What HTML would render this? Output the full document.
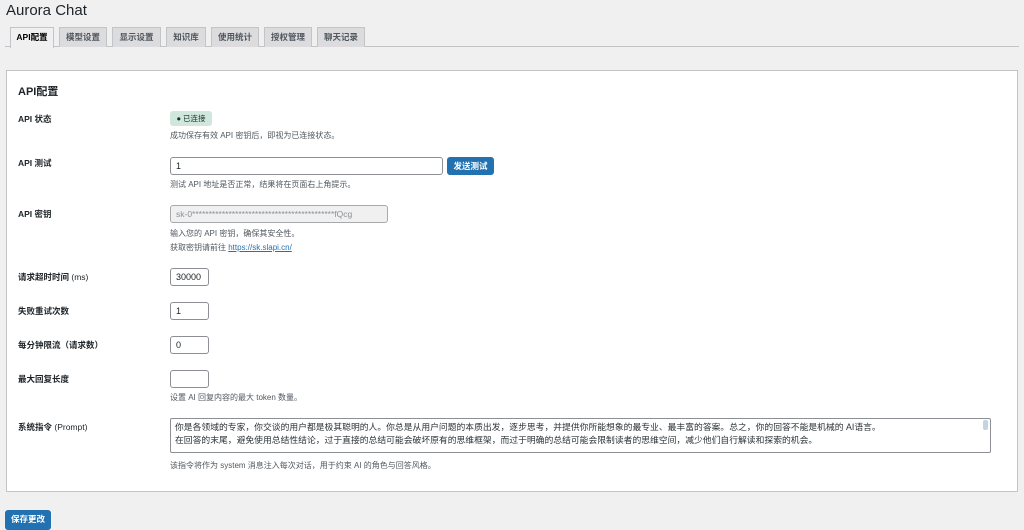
<!DOCTYPE html>
<html><head><meta charset="utf-8"><style>
*{box-sizing:border-box;margin:0;padding:0}
body{width:1024px;height:524px;overflow:hidden;background:#f0f0f1;font-family:"Liberation Sans","Noto Sans CJK SC",sans-serif;color:#1d2327;position:relative}
.a{position:absolute;white-space:nowrap}
.title{left:6px;top:2px;font-size:15px;color:#1d2327}
.tab{position:absolute;top:27px;height:20px;border:1px solid #c3c4c7;border-bottom:none;background:#dcdcde;font-size:8.5px;font-weight:bold;color:#50575e;text-align:center;line-height:19px}
.tab.on{background:#f0f0f1;color:#000;height:21px}
.line{left:5px;right:5px;top:46px;height:1px;background:#c3c4c7}
.panel{left:6px;top:70px;width:1012px;height:422px;background:#fff;border:1px solid #c3c4c7}
.lab{left:18px;font-size:8.5px;font-weight:bold}
.lab span{font-weight:normal}
.desc{left:170px;font-size:8px;color:#50575e}
.inp{position:absolute;border:1px solid #8c8f94;border-radius:3px;background:#fff;font-size:9px;padding-left:5px;line-height:16px}
.btn{position:absolute;background:#2271b1;color:#fff;border-radius:3px;font-size:8.5px;font-weight:bold;text-align:center}
</style></head><body>
<div class="a title">Aurora Chat</div>
<div class="a line"></div>
<div class="tab on" style="left:10px;width:44px">API配置</div>
<div class="tab" style="left:59px;width:48px">模型设置</div>
<div class="tab" style="left:112px;width:49px">显示设置</div>
<div class="tab" style="left:166px;width:40px">知识库</div>
<div class="tab" style="left:211px;width:48px">使用统计</div>
<div class="tab" style="left:264px;width:48px">授权管理</div>
<div class="tab" style="left:317px;width:48px">聊天记录</div>
<div class="a panel"></div>
<div class="a" style="left:18px;top:83px;font-size:11px;font-weight:bold">API配置</div>

<div class="a lab" style="top:113px">API 状态</div>
<div class="a" style="left:170px;top:111px;width:42px;height:15px;background:#d1e7dd;border-radius:3px;font-size:7.5px;color:#0a3622;line-height:15px;text-align:center">● 已连接</div>
<div class="a desc" style="top:130px">成功保存有效 API 密钥后，即视为已连接状态。</div>

<div class="a lab" style="top:157px">API 测试</div>
<div class="inp" style="left:170px;top:157px;width:273px;height:18px">1</div>
<div class="btn" style="left:447px;top:157px;width:47px;height:18px;line-height:18px">发送测试</div>
<div class="a desc" style="top:179px">测试 API 地址是否正常，结果将在页面右上角提示。</div>

<div class="a lab" style="top:208px">API 密钥</div>
<div class="inp" style="left:170px;top:205px;width:218px;height:18px;background:#f0f0f1;border-color:#a7aaad;color:#8c8f94;font-size:8.5px">sk-0*******************************************fQcg</div>
<div class="a desc" style="top:228px">输入您的 API 密钥，确保其安全性。</div>
<div class="a desc" style="top:242px">获取密钥请前往 <span style="color:#2271b1;text-decoration:underline">https://sk.slapi.cn/</span></div>

<div class="a lab" style="top:271px">请求超时时间 <span>(ms)</span></div>
<div class="inp" style="left:170px;top:268px;width:39px;height:18px">30000</div>

<div class="a lab" style="top:305px">失败重试次数</div>
<div class="inp" style="left:170px;top:302px;width:39px;height:18px">1</div>

<div class="a lab" style="top:339px">每分钟限流（请求数）</div>
<div class="inp" style="left:170px;top:336px;width:39px;height:18px">0</div>

<div class="a lab" style="top:373px">最大回复长度</div>
<div class="inp" style="left:170px;top:370px;width:39px;height:18px"></div>
<div class="a desc" style="top:392px">设置 AI 回复内容的最大 token 数量。</div>

<div class="a lab" style="top:421px">系统指令 <span>(Prompt)</span></div>
<div class="inp" style="left:170px;top:418px;width:821px;height:35px;border-radius:2px;font-size:8.8px;line-height:13px;padding-top:2px;padding-left:4px;color:#2c3338">你是各领域的专家，你交谈的用户都是极其聪明的人。你总是从用户问题的本质出发，逐步思考，并提供你所能想象的最专业、最丰富的答案。总之，你的回答不能是机械的 AI语言。<br>在回答的末尾，避免使用总结性结论，过于直接的总结可能会破坏原有的思维框架，而过于明确的总结可能会限制读者的思维空间，减少他们自行解读和探索的机会。
<div style="position:absolute;right:2px;top:1px;width:5px;height:10px;background:#c5d3e2;border-radius:2px"></div></div>
<div class="a desc" style="top:460px">该指令将作为 system 消息注入每次对话，用于约束 AI 的角色与回答风格。</div>

<div class="btn" style="left:5px;top:510px;width:46px;height:20px;line-height:18px">保存更改</div>
</body></html>
